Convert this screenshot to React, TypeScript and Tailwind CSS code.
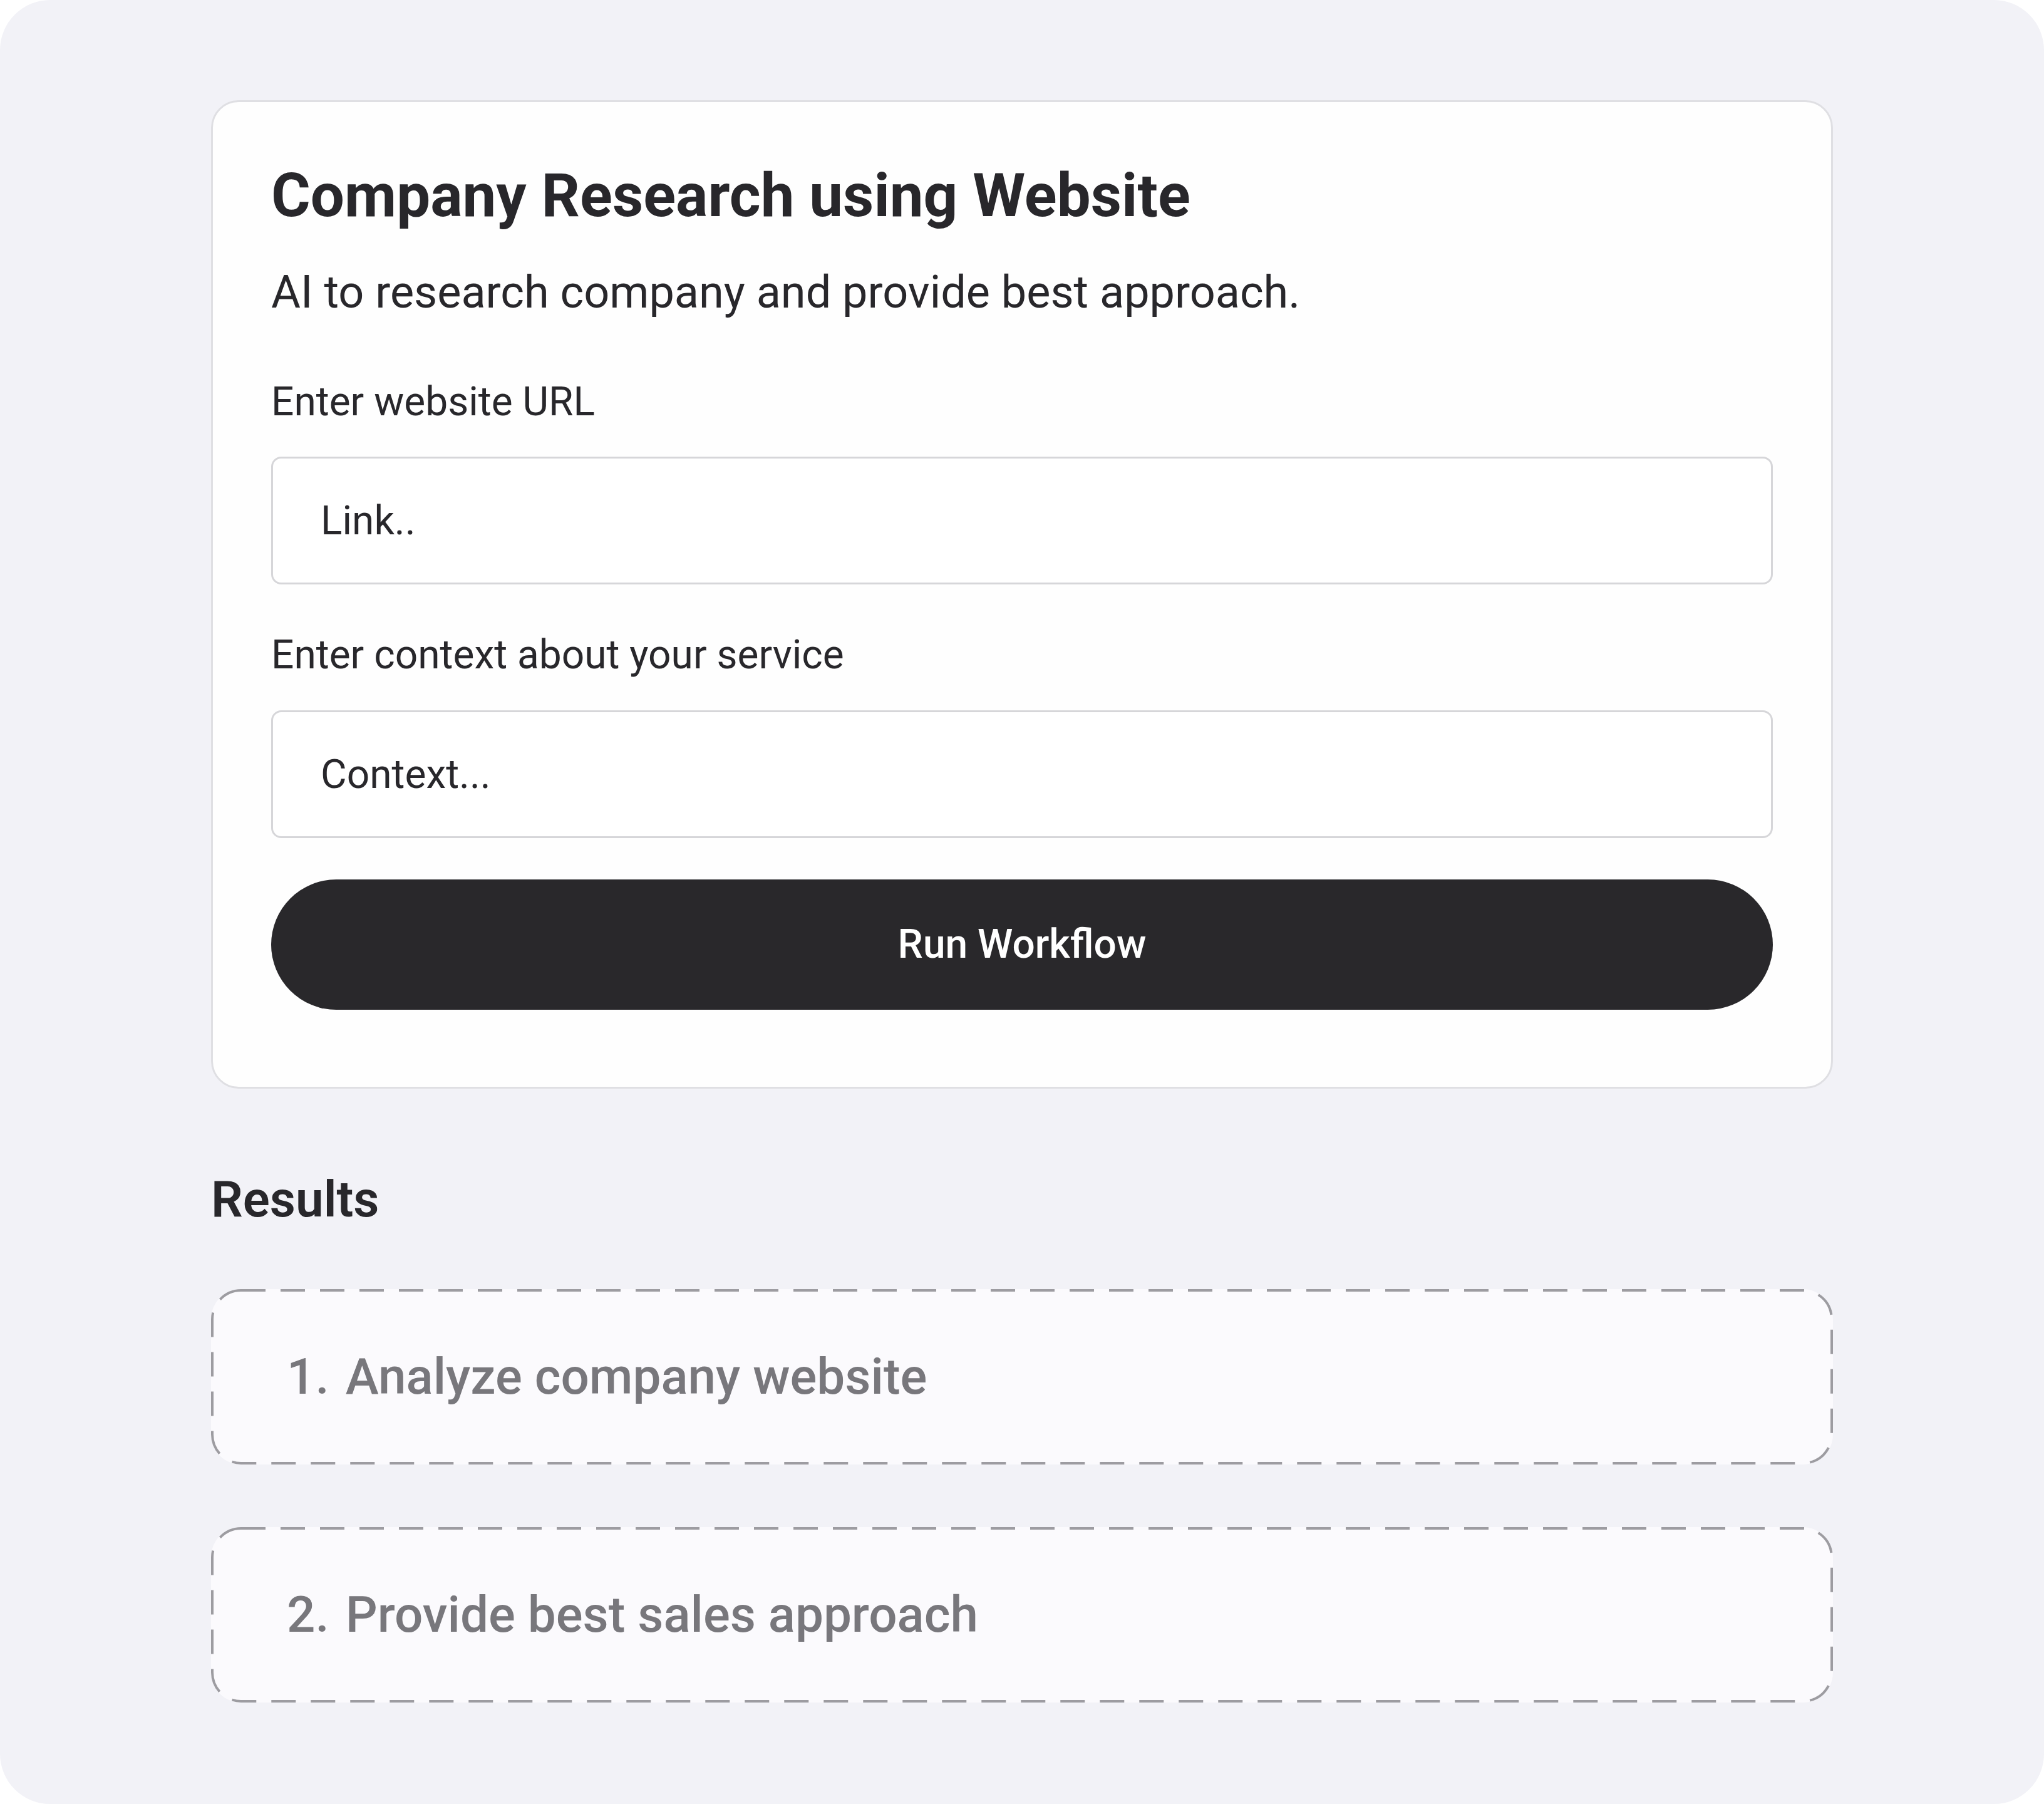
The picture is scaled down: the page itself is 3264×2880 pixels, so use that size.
const steps = ["Analyze company website", "Provide best sales approach"];

function Field({ label, placeholder }: { label: string; placeholder: string }) {
  return (
    <div className="flex flex-col gap-[49px]">
      <label className="text-[64px] leading-[1.2] text-[#28272b]">{label}</label>
      <input
        placeholder={placeholder}
        className="h-[204px] w-full rounded-[16px] border-[3px] border-[#d6d6d9] bg-white px-[76px] text-[64px] text-[#28272b] outline-none placeholder:text-[#28272b]"
      />
    </div>
  );
}

function StepBox({ index, text }: { index: number; text: string }) {
  return (
    <div className="relative flex h-[280px] items-center rounded-[48px] bg-[#fbfafd] pl-[121px]">
      <svg className="pointer-events-none absolute inset-0" width="2590" height="280" fill="none">
        <rect
          x="2"
          y="2"
          width="2586"
          height="276"
          rx="46"
          stroke="#9d9ca1"
          strokeWidth="4"
          strokeDasharray="39 24"
        />
      </svg>
      <p className="flex gap-[26px] text-[80px] font-medium leading-[1.2] text-[#78777c]">
        <span>{index}.</span>
        <span>{text}</span>
      </p>
    </div>
  );
}

export default function App() {
  return (
    <div className="bg-white font-['Roboto',sans-serif]">
      <div className="flex h-[2880px] w-[3264px] flex-col items-center rounded-[80px] bg-[#f2f2f7] pt-[160px]">
        <div className="w-[2590px]">
          <div className="rounded-[44px] border-[3px] border-[#dfdfe3] bg-[#fefefe] px-[93px] pb-[123px] pt-[92px]">
            <h1 className="text-[96px] font-bold leading-[1.2] text-[#28272b]">Company Research using Website</h1>
            <p className="mt-[54px] text-[72px] leading-[1.2] text-[#28272b]">
              AI to research company and provide best approach.
            </p>
            <div className="mt-[93px] flex flex-col gap-[75px]">
              <Field label="Enter website URL" placeholder="Link.." />
              <Field label="Enter context about your service" placeholder="Context..." />
            </div>
            <button className="mt-[66px] flex h-[208px] w-full items-center justify-center rounded-full bg-[#29282b] text-[64px] font-medium text-white">
              Run Workflow
            </button>
          </div>

          <h2 className="mt-[129px] text-[80px] font-semibold leading-[1.2] text-[#28272b]">Results</h2>
          <div className="mt-[95px] flex flex-col gap-[100px]">
            {steps.map((s, i) => (
              <StepBox key={s} index={i + 1} text={s} />
            ))}
          </div>
        </div>
      </div>
    </div>
  );
}
